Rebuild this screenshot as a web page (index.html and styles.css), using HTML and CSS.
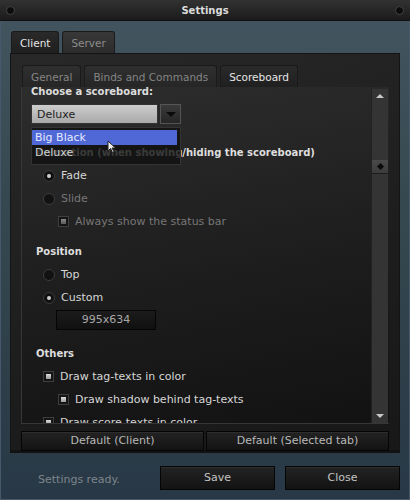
FILE: index.html
```html
<!DOCTYPE html>
<html lang="en">
<head>
    <meta charset="UTF-8">
    <title>Settings</title>
    <link rel="stylesheet" href="styles.css">
</head>
<body>
    <div class="window">
        <div class="titlebar">
            <span class="dot"></span>
            <span class="title">Settings</span>
            <span class="dot"></span>
        </div>

        <div class="outer-tabs">
            <div class="tab active">Client</div>
            <div class="tab">Server</div>
        </div>

        <div class="panel">
            <div class="inner-tabs">
                <div class="tab">General</div>
                <div class="tab">Binds and Commands</div>
                <div class="tab active">Scoreboard</div>
            </div>

            <div class="page">
                <div class="content">
                    <div class="heading first">Choose a scoreboard:</div>
                    <div class="combo">
                        <div class="combo-field">Deluxe</div>
                        <div class="combo-button"><span class="arrow"></span></div>
                        <div class="combo-list">
                            <div class="item selected">Big Black</div>
                            <div class="item">Deluxe</div>
                        </div>
                        <svg class="cursor" width="10" height="14" viewBox="0 0 10 14">
                            <path d="M1 1 L1 11 L3.5 8.5 L5.5 12.5 L7 11.8 L5 8 L8.5 8 Z" fill="#eee" stroke="#222" stroke-width="1"/>
                        </svg>
                    </div>

                    <div class="heading anim">Animation (when showing/hiding the scoreboard)</div>
                    <div class="row"><span class="radio checked"></span>Fade</div>
                    <div class="row disabled"><span class="radio"></span>Slide</div>
                    <div class="row sub disabled"><span class="check"></span>Always show the status bar</div>

                    <div class="heading section">Position</div>
                    <div class="row"><span class="radio"></span>Top</div>
                    <div class="row"><span class="radio checked"></span>Custom</div>
                    <div class="size-button">995x634</div>

                    <div class="heading others">Others</div>
                    <div class="row"><span class="check"></span>Draw tag-texts in color</div>
                    <div class="row sub"><span class="check"></span>Draw shadow behind tag-texts</div>
                    <div class="row"><span class="check"></span>Draw score-texts in color</div>
                </div>

                <div class="scrollbar">
                    <div class="scroll-up"></div>
                    <div class="scroll-thumb"><span class="diamond"></span></div>
                    <div class="scroll-track"></div>
                    <div class="scroll-down"></div>
                </div>
            </div>

            <div class="defaults">
                <div class="button">Default (Client)</div>
                <div class="button">Default (Selected tab)</div>
            </div>
        </div>

        <div class="footer">
            <span class="status">Settings ready.</span>
            <div class="button big">Save</div>
            <div class="button big">Close</div>
        </div>
    </div>
</body>
</html>
```

FILE: styles.css
```css
html, body {
    margin: 0;
    padding: 0;
}

body {
    width: 410px;
    height: 500px;
    font-family: "DejaVu Sans", sans-serif;
    font-size: 11px;
    color: #d8d8d8;
    background-color: #2b3a46;
}

.window {
    width: 410px;
    height: 500px;
    box-sizing: border-box;
    border: 1px solid #47586a;
    border-top: none;
    background: linear-gradient(to bottom, #435560 0%, #36484f 40%, #283846 100%);
    display: flex;
    flex-direction: column;
}

.titlebar {
    height: 21px;
    margin: 0 -1px;
    background: linear-gradient(to bottom, #323232, #1b1b1b);
    border-bottom: 1px solid #101010;
    display: flex;
    align-items: center;
    justify-content: space-between;
    padding: 0 6px;
    box-sizing: border-box;
}

.title {
    font-weight: bold;
    font-size: 10px;
    color: #dcdcdc;
}

.dot {
    width: 7px;
    height: 7px;
    border-radius: 50%;
    background: #0c0c0c;
    border: 1px solid #444;
}

/* tabs */
.outer-tabs, .inner-tabs {
    display: flex;
    gap: 3px;
}

.outer-tabs {
    margin: 10px 0 0 10px;
}

.tab {
    height: 21px;
    padding: 0 8px;
    display: flex;
    align-items: center;
    border: 1px solid #1a1a1a;
    border-bottom: none;
    border-radius: 3px 3px 0 0;
    background: linear-gradient(to bottom, #2f2f2f, #262626);
    color: #858585;
    font-size: 10.5px;
}

.tab.active {
    background: linear-gradient(to bottom, #2a2a2a, #1f1f1f);
    color: #e6e6e6;
}

.outer-tabs .tab:not(.active) {
    background: linear-gradient(to bottom, #383838, #2c2c2c);
    color: #8c8c8c;
}

.panel {
    margin: 0 9px 0 9px;
    height: 400px;
    box-sizing: border-box;
    background: linear-gradient(160deg, #282828, #1d1d1d 60%, #181818);
    border: 1px solid #141414;
    border-bottom: 3px solid #121212;
    padding: 11px 10px 0 10px;
}

.inner-tabs {
    margin-left: 1px;
}

.page {
    height: 336px;
    display: flex;
    border: 1px solid #363636;
    border-top: none;
    border-right: none;
    background: linear-gradient(170deg, #2d2d2d 0%, #1d1d1d 55%, #121212 100%);
    overflow: hidden;
}

.content {
    flex: 1;
    margin-top: -6px;
    padding-left: 9px;
}

.heading {
    height: 22px;
    line-height: 22px;
    font-weight: bold;
    font-size: 10px;
    color: #dedede;
    white-space: nowrap;
}

.heading.anim {
    margin-top: 18px;
    padding-left: 5px;
}

.heading.section {
    margin-top: 8px;
    padding-left: 5px;
}

.heading.others {
    margin-top: 13px;
    padding-left: 5px;
}

.row {
    height: 23px;
    display: flex;
    align-items: center;
    padding-left: 12px;
    color: #d6d6d6;
    white-space: nowrap;
}

.row.sub {
    padding-left: 27px;
}

.row.disabled {
    color: #777;
}

.radio {
    width: 10px;
    height: 10px;
    border-radius: 50%;
    background: #121212;
    border: 1px solid #3c3c3c;
    margin-right: 6px;
    display: flex;
    align-items: center;
    justify-content: center;
}

.radio.checked::after {
    content: "";
    width: 4px;
    height: 4px;
    border-radius: 50%;
    background: #cfcfcf;
}

.check {
    width: 9px;
    height: 9px;
    border: 1px solid #3e3e3e;
    background: #151515;
    margin-right: 6px;
    display: flex;
    align-items: center;
    justify-content: center;
}

.check::after {
    content: "";
    width: 5px;
    height: 5px;
    background: linear-gradient(to bottom, #dcdcdc, #9a9a9a);
}

.disabled .check::after {
    background: linear-gradient(to bottom, #888, #5a5a5a);
}

/* combo box */
.combo {
    position: relative;
    margin-top: 1px;
    width: 150px;
    height: 20px;
    display: flex;
    gap: 2px;
}

.combo-field {
    flex: 1;
    background: linear-gradient(to bottom, #cdcdcd, #a9a9a9);
    border: 1px solid #333;
    color: #1e1e1e;
    padding-left: 5px;
    display: flex;
    align-items: center;
}

.combo-button {
    width: 19px;
    background: linear-gradient(to bottom, #3a3a3a, #262626);
    border: 1px solid #555;
    display: flex;
    align-items: center;
    justify-content: center;
}

.arrow {
    width: 0;
    height: 0;
    border-left: 5px solid transparent;
    border-right: 5px solid transparent;
    border-top: 5px solid #0a0a0a;
}

.combo-list {
    position: absolute;
    left: 0;
    top: 23px;
    width: 148px;
    padding: 2px 0 4px 0;
    background: rgba(16, 16, 16, 0.8);
    border: 1px solid #333;
    z-index: 2;
}

.item {
    height: 15px;
    line-height: 15px;
    padding-left: 3px;
    margin-right: 3px;
    color: #d0d0d0;
}

.item.selected {
    background: #4f68d6;
    color: #e6eaff;
}

.cursor {
    position: absolute;
    left: 76px;
    top: 36px;
    z-index: 3;
}

.size-button {
    margin: 1px 0 0 25px;
    width: 98px;
    height: 18px;
    line-height: 18px;
    text-align: center;
    background: linear-gradient(to bottom, #1c1c1c, #101010);
    border: 1px solid #050505;
    color: #a8a8a8;
}

/* scrollbar */
.scrollbar {
    width: 16px;
    margin: 2px 1px 0 0;
    background: #343434;
    border-left: 1px solid #222;
    display: flex;
    flex-direction: column;
}

.scroll-up, .scroll-down {
    height: 14px;
    display: flex;
    align-items: center;
    justify-content: center;
}

.scroll-up::after {
    content: "";
    border-left: 4px solid transparent;
    border-right: 4px solid transparent;
    border-bottom: 4px solid #c8c8c8;
}

.scroll-down::after {
    content: "";
    border-left: 4px solid transparent;
    border-right: 4px solid transparent;
    border-top: 4px solid #c8c8c8;
}

.scroll-thumb {
    margin-top: 57px;
    height: 13px;
    background: linear-gradient(to bottom, #4a4a4a, #3c3c3c);
    border-bottom: 1px solid #1c1c1c;
    display: flex;
    align-items: center;
    justify-content: center;
}

.diamond {
    width: 5px;
    height: 5px;
    background: #0a0a0a;
    transform: rotate(45deg);
}

.scroll-track {
    flex: 1;
}

/* buttons */
.defaults {
    display: flex;
    gap: 2px;
    margin-top: 7px;
}

.button {
    flex: 1;
    height: 18px;
    line-height: 18px;
    text-align: center;
    background: linear-gradient(to bottom, #232323, #131313);
    border: 1px solid #050505;
    box-shadow: inset 0 1px 0 #2e2e2e;
    color: #b8b8b8;
}

.footer {
    display: flex;
    align-items: center;
    margin-top: 13px;
    padding: 0 9px 0 37px;
    gap: 10px;
}

.status {
    flex: 1;
    color: #7d858c;
    margin-top: 2px;
}

.button.big {
    flex: none;
    width: 113px;
    height: 22px;
    line-height: 22px;
    font-size: 11px;
    color: #c4c4c4;
}
```
